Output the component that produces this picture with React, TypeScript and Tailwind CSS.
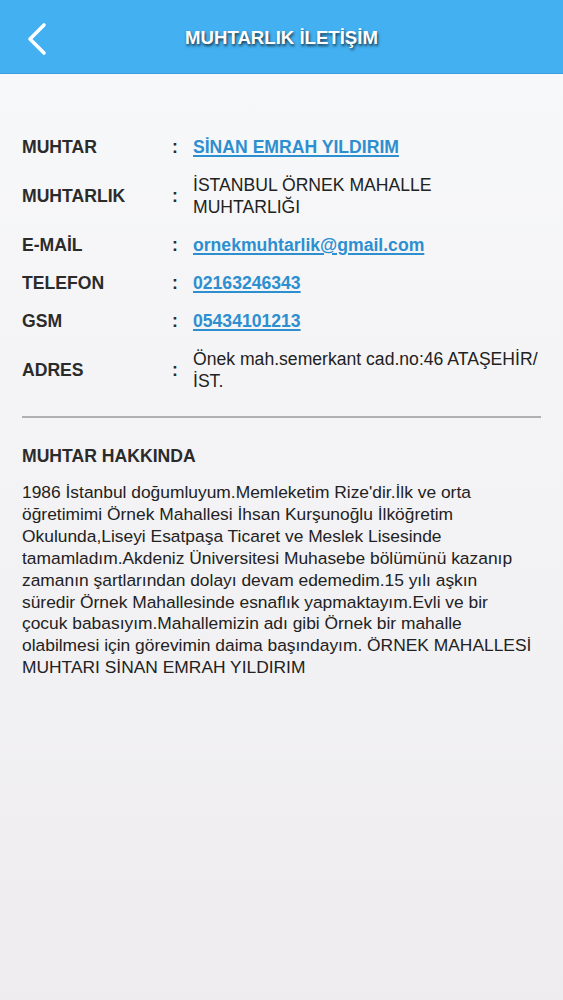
import React from 'react';

interface InfoRow {
  label: string;
  value: string;
  link?: boolean;
}

const rows: InfoRow[] = [
  { label: 'MUHTAR', value: 'SİNAN EMRAH YILDIRIM', link: true },
  { label: 'MUHTARLIK', value: 'İSTANBUL ÖRNEK MAHALLE MUHTARLIĞI' },
  { label: 'E-MAİL', value: 'ornekmuhtarlik@gmail.com', link: true },
  { label: 'TELEFON', value: '02163246343', link: true },
  { label: 'GSM', value: '05434101213', link: true },
  { label: 'ADRES', value: 'Önek mah.semerkant cad.no:46 ATAŞEHİR/ İST.' },
];

// satirlar uygulamadaki kirilimla ayni
const aboutLines = [
  "1986 İstanbul doğumluyum.Memleketim Rize'dir.İlk ve orta",
  'öğretimimi Örnek Mahallesi İhsan Kurşunoğlu İlköğretim',
  'Okulunda,Liseyi Esatpaşa Ticaret ve Meslek Lisesinde',
  'tamamladım.Akdeniz Üniversitesi Muhasebe bölümünü kazanıp',
  'zamanın şartlarından dolayı devam edemedim.15 yılı aşkın',
  'süredir Örnek Mahallesinde esnaflık yapmaktayım.Evli ve bir',
  'çocuk babasıyım.Mahallemizin adı gibi Örnek bir mahalle',
  'olabilmesi için görevimin daima başındayım. ÖRNEK MAHALLESİ',
  'MUHTARI SİNAN EMRAH YILDIRIM',
];

const App: React.FC = () => {
  return (
    <div
      className="min-h-[1000px] w-full bg-gradient-to-b from-[#f8f9fa] to-[#eeecef] text-[#222]"
      style={{ fontFamily: '"Liberation Sans", Arial, sans-serif' }}
    >
      {/* ust bar */}
      <div className="relative flex h-[74px] items-center justify-center border-b border-[#3a9fdc] bg-[#43b0f1]">
        <button className="absolute left-[26px] top-[22px] h-[34px] w-[22px]">
          <svg viewBox="0 0 22 34" className="h-full w-full" fill="none">
            <path d="M18 3 L4 17 L18 31" stroke="white" strokeWidth="3.6" strokeLinecap="round" strokeLinejoin="round" />
          </svg>
        </button>
        <h1 className="mt-[3px] text-[18.6px] font-bold text-white [text-shadow:1px_2px_3px_rgba(0,0,0,0.7)]">
          MUHTARLIK İLETİŞİM
        </h1>
      </div>

      <div className="px-[22px] pt-[62px]">
        <div className="flex flex-col gap-[16px]">
          {rows.map((r) => (
            <div key={r.label} className="flex items-center text-[17.6px] leading-[22px]">
              <div className="w-[150px] font-bold text-[#2b2b2b]">{r.label}</div>
              <div className="w-[21px] font-bold text-[#2b2b2b]">:</div>
              <div className="flex-1">
                {r.link ? (
                  <a href="#" className="font-bold text-[#2d8fd0] underline decoration-[1.5px] underline-offset-2">
                    {r.value}
                  </a>
                ) : (
                  <span className="text-[#222]">{r.value}</span>
                )}
              </div>
            </div>
          ))}
        </div>

        <div className="mt-[24px] h-[2px] w-full bg-[#b0b0b2]" />

        <h2 className="mt-[27px] text-[17.6px] font-bold leading-[22px] text-[#2b2b2b]">MUHTAR HAKKINDA</h2>
        <p className="mt-[15px] whitespace-nowrap text-[17.4px] leading-[21.9px] text-[#222]">
          {aboutLines.map((line, i) => (
            <React.Fragment key={i}>
              {line}
              {i < aboutLines.length - 1 && <br />}
            </React.Fragment>
          ))}
        </p>
      </div>
    </div>
  );
};

export default App;
